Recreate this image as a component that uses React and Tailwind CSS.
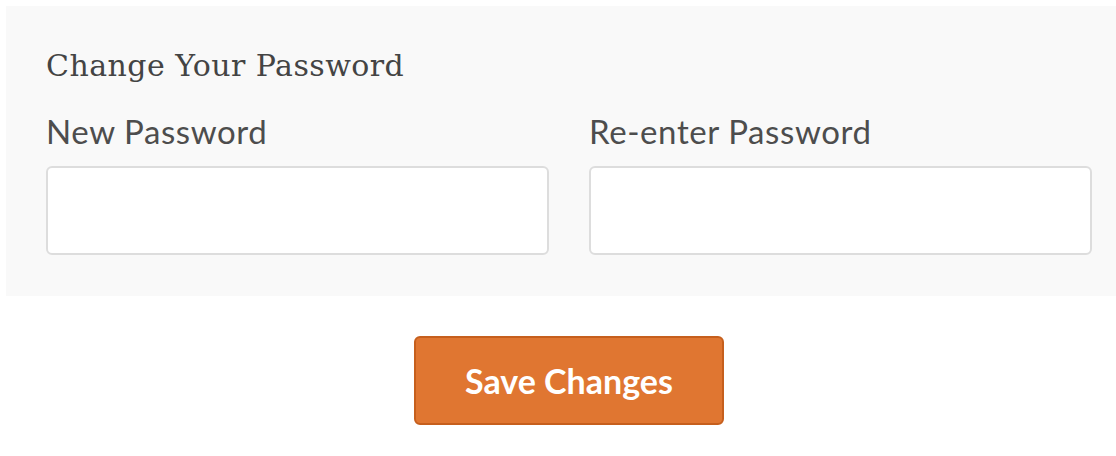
import React from "react";

export default function App() {
  return (
    <div className="min-h-screen bg-white pl-[6px] pt-[6px] text-[#4d4d4d]" style={{ fontFamily: "Lato, 'Open Sans', sans-serif" }}>
      <div className="bg-[#f9f9f9] pl-10 pr-6 pt-[42px] pb-[41px]">
        <h2 className="text-[30px] leading-[36px] tracking-[0.45px] text-[#444]" style={{ fontFamily: "'DejaVu Serif', 'Liberation Serif', serif" }}>
          Change Your Password
        </h2>

        <form className="grid grid-cols-2 gap-10 mt-[27px]">
          <div>
            <label className="block text-[33px] leading-[40px] tracking-[0.6px] mb-[15px]">New Password</label>
            <input type="password" className="w-full h-[89px] bg-white border-2 border-[#dddddd] rounded-[6px] outline-none" />
          </div>
          <div>
            <label className="block text-[33px] leading-[40px] tracking-[0.6px] mb-[15px]">Re-enter Password</label>
            <input type="password" className="w-full h-[89px] bg-white border-2 border-[#dddddd] rounded-[6px] outline-none" />
          </div>
        </form>
      </div>

      <div className="flex justify-center pl-[16px] mt-10">
        <button
          type="submit"
          className="w-[310px] h-[89px] bg-[#e07631] border-2 border-[#c65f1d] rounded-[6px] text-white font-bold text-[34px]"
        >
          Save Changes
        </button>
      </div>
    </div>
  );
}
